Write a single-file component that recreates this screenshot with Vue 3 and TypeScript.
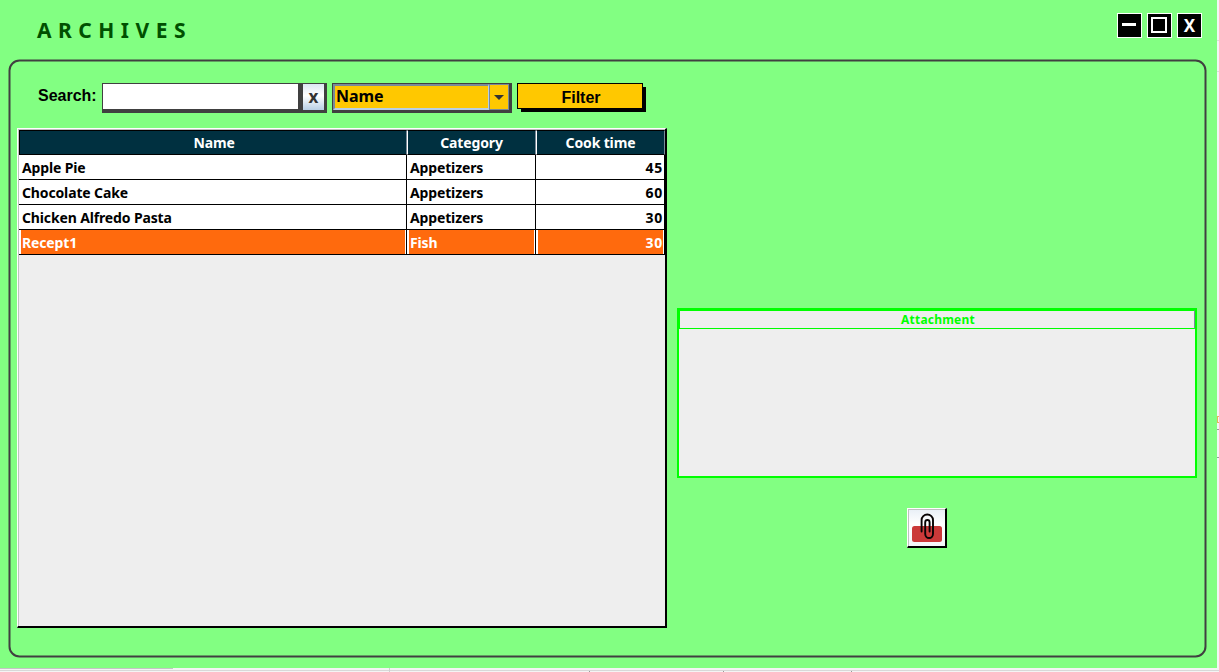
<script setup lang="ts">
import { ref } from 'vue'

interface Recipe {
  name: string
  category: string
  time: number
}

const recipes: Recipe[] = [
  { name: 'Apple Pie', category: 'Appetizers', time: 45 },
  { name: 'Chocolate Cake', category: 'Appetizers', time: 60 },
  { name: 'Chicken Alfredo Pasta', category: 'Appetizers', time: 30 },
  { name: 'Recept1', category: 'Fish', time: 30 },
]
const selected = ref(3)
const query = ref('')
</script>

<template>
  <div class="screen">
    <div class="window">
      <svg class="frame" width="1217" height="668" viewBox="0 0 1217 668">
        <rect x="9.5" y="60.5" width="1196" height="596" rx="10" fill="none" stroke="#404040" stroke-width="2" />
      </svg>
      <header class="titlebar">
        <h1>ARCHIVES</h1>
        <div class="controls">
          <button aria-label="Minimize">
            <svg width="23" height="23" viewBox="0 0 23 23"><path d="M4 9h14v3H4z" fill="#fff" /></svg>
          </button>
          <button aria-label="Maximize">
            <svg width="23" height="23" viewBox="0 0 23 23"><path d="M4 4h14v14H4z" fill="none" stroke="#fff" stroke-width="2" /></svg>
          </button>
          <button class="close">X</button>
        </div>
      </header>
      <div class="toolbar">
        <label>Search:</label>
        <div class="search">
          <input v-model="query" type="text" />
          <button @click="query = ''">x</button>
        </div>
        <div class="combo">
          <div class="value">Name</div>
          <div class="arrow"><svg width="10" height="5" viewBox="0 0 10 5"><path d="M0 0h10L5 5z" fill="#333" /></svg></div>
        </div>
        <button class="filter"><span>Filter</span></button>
      </div>
      <main>
        <section class="table">
          <div class="row head">
            <div><span>Name</span></div>
            <div><span>Category</span></div>
            <div><span>Cook time</span></div>
          </div>
          <div v-for="(r, i) in recipes" :key="r.name" class="row" :class="{ selected: i === selected }" @click="selected = i">
            <div><span>{{ r.name }}</span></div>
            <div><span>{{ r.category }}</span></div>
            <div class="num"><span>{{ r.time }}</span></div>
          </div>
        </section>
        <aside>
          <div class="attachment">
            <div class="caption">Attachment</div>
          </div>
          <button class="clip" aria-label="Attach">
            <svg width="36" height="36" viewBox="0 0 36 36">
              <rect x="3" y="16" width="30" height="16" rx="2.5" fill="#cb3939" />
              <path d="M12.6 21.5V10a5.7 5.5 0 0 1 11.4 0V23.7a3.9 4.3 0 0 1-7.8 0V12.4a2.2 2.4 0 0 1 4.4 0V21.5" fill="none" stroke="#080404" stroke-width="1.9" stroke-linecap="round" />
            </svg>
          </button>
        </aside>
      </main>
    </div>
    <div class="edge-right"><i class="e1"></i><i class="e2"></i><i class="e3"></i><i class="e4"></i><i class="e5"></i></div>
    <div class="edge-bottom"><i class="b1"></i><i class="b2"></i><i class="b3"></i><i class="b4"></i><i class="b5"></i></div>
  </div>
</template>

<style>
html, body { overflow: hidden; }
</style>

<style scoped>
* { box-sizing: border-box; }
button { margin: 0; padding: 0; border: 0; border-radius: 0; display: flex; align-items: center; justify-content: center; }
svg { display: block; flex: none; }
.screen {
  display: grid; grid-template: 668px 4px / 1217px 2px;
  width: 1219px; height: 672px; background: #f4f4f4;
  font-family: "Noto Sans", sans-serif; font-weight: 700; color: #000;
}
.window { position: relative; background: #82ff82; display: flex; flex-direction: column; }
.frame { position: absolute; left: 0; top: 0; pointer-events: none; }
.titlebar { height: 83px; display: flex; justify-content: space-between; padding: 13px 15px 0 37px; }
h1 { margin: 3px 0 0; font-size: 21px; line-height: 29px; height: 29px; letter-spacing: 6.5px; color: #005000; }
.controls { display: flex; gap: 5px; }
.controls button { width: 25px; height: 25px; background: #000; border: 1px solid #fff; color: #fff; }
.controls .close { font: 700 17px/23px "Noto Sans", sans-serif; }
.toolbar { display: flex; height: 45px; padding-left: 38px; }
label { width: 64px; font: 700 16px/25px "Liberation Sans", sans-serif; }
.search { width: 225px; height: 30px; background: #404040; padding: 1px 3px 3px 1px; display: flex; justify-content: space-between; }
.search input { width: 195px; height: 25px; border: 0; padding: 0 3px; background: #fff; outline: 0; }
.search button { width: 21px; height: 26px; color: #333; font: 700 17px/26px "Noto Sans", sans-serif; background: linear-gradient(#dce7f3, #fff 45%, #b8cfe5); }
.combo { width: 180px; height: 30px; margin-left: 5px; background: #404040; padding: 1px 3px 3px 1px; display: flex; }
.value { width: 156px; border: 2px solid #b8cfe5; border-color: #7a8a99 #b8cfe5 #b8cfe5 #7a8a99; border-width: 2px 1px 2px 2px; background: #ffc800; padding-left: 1px; font-size: 16px; line-height: 21px; letter-spacing: -.1px; }
.arrow { width: 20px; border: 1px solid #7a8a99; background: #ffc800; display: flex; align-items: center; justify-content: center; }
.filter { position: relative; isolation: isolate; width: 126px; height: 26px; margin-left: 5px; font: 700 16px/24px "Liberation Sans", sans-serif; color: #000; }
.filter span { width: 126px; height: 26px; flex: none; background: #ffc800; border: 1px solid #000; line-height: 27px; padding-left: 2px; text-align: center; }
.filter::before { content: ''; position: absolute; z-index: -1; left: 4px; top: 4px; width: 125px; height: 25px; background: #000; }
main { display: flex; align-items: flex-start; padding-left: 17px; }
.table { width: 650px; height: 500px; background: #eee; border: 2px solid #000; border-top: 1px solid #fff; border-left: 1px solid #fff; box-shadow: inset 1px 1px 0 #c0c0c0; padding: 1px 0 0 1px; }
.row { display: grid; grid-template-columns: 388px 129px 129px; width: 646px; height: 25px; font-size: 14px; letter-spacing: -.14px; }
.row > div { border-right: 1px solid #000; border-bottom: 1px solid #000; background: #fff; padding: 1px 2px 0 3px; height: 25px; line-height: 24px; overflow: hidden; white-space: nowrap; }
.row .num { text-align: right; letter-spacing: .8px; padding-right: 1px; }
.head > div { background: #003040; color: #fff; text-align: center; border-top: 1px solid #000; border-right-color: #7a8a99; border-left: 1px solid #fff; padding: 0; line-height: 23px; }
.head > div:first-child { border-left-color: #000; padding-left: 2px; }
.selected > div { background: #ff6a0d; color: #fff; box-shadow: inset 2px 0 #fff, inset -1px 0 #fff; }
aside { width: 520px; margin: 180px 0 0 10px; display: flex; flex-direction: column; align-items: center; }
.attachment { width: 520px; height: 170px; border: 2px solid #0f0; background: #eee; }
.caption { height: 19px; border: 1px solid #0f0; border-right-color: #7a8a99; font-size: 12px; line-height: 17px; text-align: center; letter-spacing: .2px; padding-left: 2px; color: #0f0; }
.clip { width: 40px; height: 40px; margin: 30px 20px 0 0; border: 2px solid #000; border-top: 1px solid #fff; border-left: 1px solid #fff; background: linear-gradient(#e8eff6, #fff 40%, #f3f6fa); box-shadow: inset 1px 1px #c0c0c0; }
.edge-right { display: flex; flex-direction: column; background: #f4f4f4; }
.edge-right i { height: 1px; flex: none; background: #dcdcdc; }
.e1 { margin-top: 40px; }
.e2 { margin-top: 30px; }
.edge-right .e3 { margin-top: 344px; height: 7px; background: transparent; border: solid #e5b35c; border-width: 1px 0 1px 1px; }
.edge-right .e4 { margin-top: 6px; background: #999; }
.edge-right .e5 { margin-top: 27px; background: #999; }
.edge-bottom { grid-column: 1 / 3; display: flex; background: linear-gradient(#f4f4f4 2px, #d8d8d8 2px, #d8d8d8 3px, #f4f4f4 3px); }
.edge-bottom i { height: 4px; flex: none; }
.b1 { width: 173px; border-top: 1px solid #c4c4c4; }
.b2 { width: 217px; border-right: 1px solid #d0d0d0; }
.b3 { width: 200px; border-left: 4px solid #f4f4f4; border-right: 1px solid #999; }
.b4 { width: 134px; border-right: 1px solid #999; }
.b5 { width: 128px; border-right: 1px solid #999; }
.b3, .b4, .b5 { clip-path: inset(3px 0 0 0); }
</style>
